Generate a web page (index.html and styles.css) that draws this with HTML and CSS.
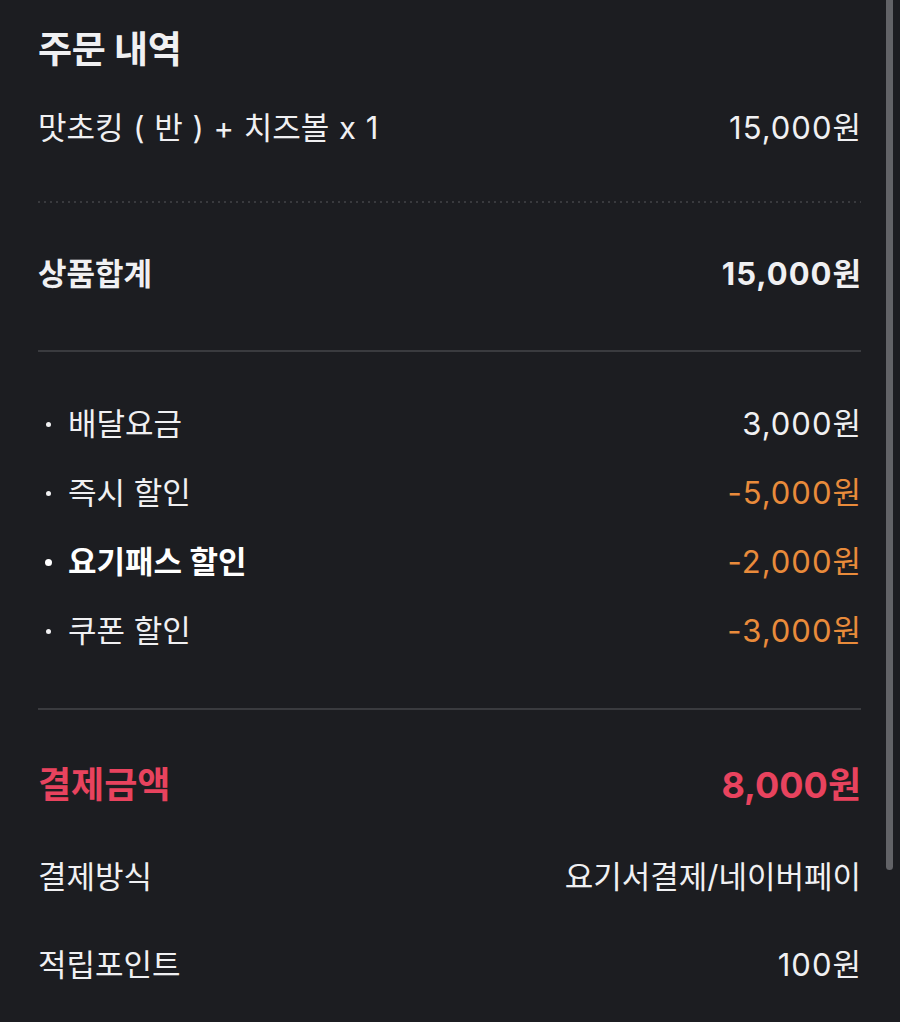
FILE: index.html
```html
<!DOCTYPE html>
<html lang="ko">
<head>
<meta charset="utf-8">
<title>주문 내역</title>
<link rel="stylesheet" href="styles.css">
</head>
<body>
<main class="receipt">
  <h1 class="title">주문 내역</h1>
  <div class="row item">
    <span class="item-name">맛초킹 ( 반 ) + 치즈볼 x 1</span>
    <span class="num">15,000원</span>
  </div>
  <hr class="dots">
  <div class="row subtotal">
    <span>상품합계</span>
    <span class="num">15,000원</span>
  </div>
  <hr class="line">
  <ul class="details">
    <li class="row"><span class="label">배달요금</span><span class="num">3,000원</span></li>
    <li class="row"><span class="label">즉시 할인</span><span class="num minus">-5,000원</span></li>
    <li class="row strong"><span class="label">요기패스 할인</span><span class="num minus">-2,000원</span></li>
    <li class="row"><span class="label">쿠폰 할인</span><span class="num minus">-3,000원</span></li>
  </ul>
  <hr class="line line-bottom">
  <div class="row total">
    <span>결제금액</span>
    <span class="num">8,000원</span>
  </div>
  <div class="row method">
    <span>결제방식</span>
    <span>요기서결제/네이버페이</span>
  </div>
  <div class="row points">
    <span>적립포인트</span>
    <span class="num">100원</span>
  </div>
</main>
<div class="scrollbar"></div>
</body>
</html>
```

FILE: styles.css
```css
html, body {
  margin: 0;
  padding: 0;
  background: #1c1d21;
  height: 100%;
  overflow: hidden;
}

body {
  font-family: Inter, "Noto Sans CJK KR", sans-serif;
  color: #f0f0f2;
  position: relative;
}

.receipt {
  padding: 30px 39px 0 38px;
  display: flex;
  flex-direction: column;
}

.title {
  margin: 0;
  font-size: 37px;
  line-height: 40px;
  font-weight: 700;
  letter-spacing: -0.3px;
}

.row {
  display: flex;
  justify-content: space-between;
  align-items: center;
  height: 40px;
  font-size: 31px;
  line-height: 40px;
  white-space: nowrap;
}

.num {
  letter-spacing: 1px;
  margin-right: -1px;
}

.item {
  margin-top: 38px;
}

.item-name {
  word-spacing: 1px;
}

.dots {
  margin: 53px 0 0;
  border: 0;
  height: 2px;
  background-image: linear-gradient(to right, #393a3e 2px, transparent 2px);
  background-size: 6px 2px;
}

.subtotal {
  margin-top: 51px;
  font-weight: 700;
}

.line {
  margin: 56px 0 0;
  border: 0;
  height: 2px;
  background: #3a3b3f;
}

.details {
  list-style: none;
  margin: 52px 0 0;
  padding: 0;
  display: flex;
  flex-direction: column;
  gap: 29px;
}

.details .label {
  display: flex;
  align-items: center;
}

.details .label::before {
  content: "";
  width: 5px;
  height: 5px;
  border-radius: 50%;
  background: currentColor;
  margin: 0 17px 0 8px;
}

.details .strong {
  font-weight: 700;
  color: #ffffff;
}

.details .strong .label::before {
  width: 7px;
  height: 7px;
  margin: 0 16px 0 7px;
}

.details .strong .minus {
  font-weight: 400;
}

.minus {
  color: #e98b3b;
}

.line-bottom {
  margin-top: 57px;
}

.total {
  margin-top: 55px;
  font-size: 36px;
  font-weight: 700;
  color: #e8435e;
}

.total .num {
  letter-spacing: 0;
  margin-right: 0;
}

.method {
  margin-top: 52px;
}

.points {
  margin-top: 48px;
}

.scrollbar {
  position: absolute;
  top: -4px;
  right: 7px;
  width: 7px;
  height: 874px;
  border-radius: 4px;
  background: #626367;
}
```
